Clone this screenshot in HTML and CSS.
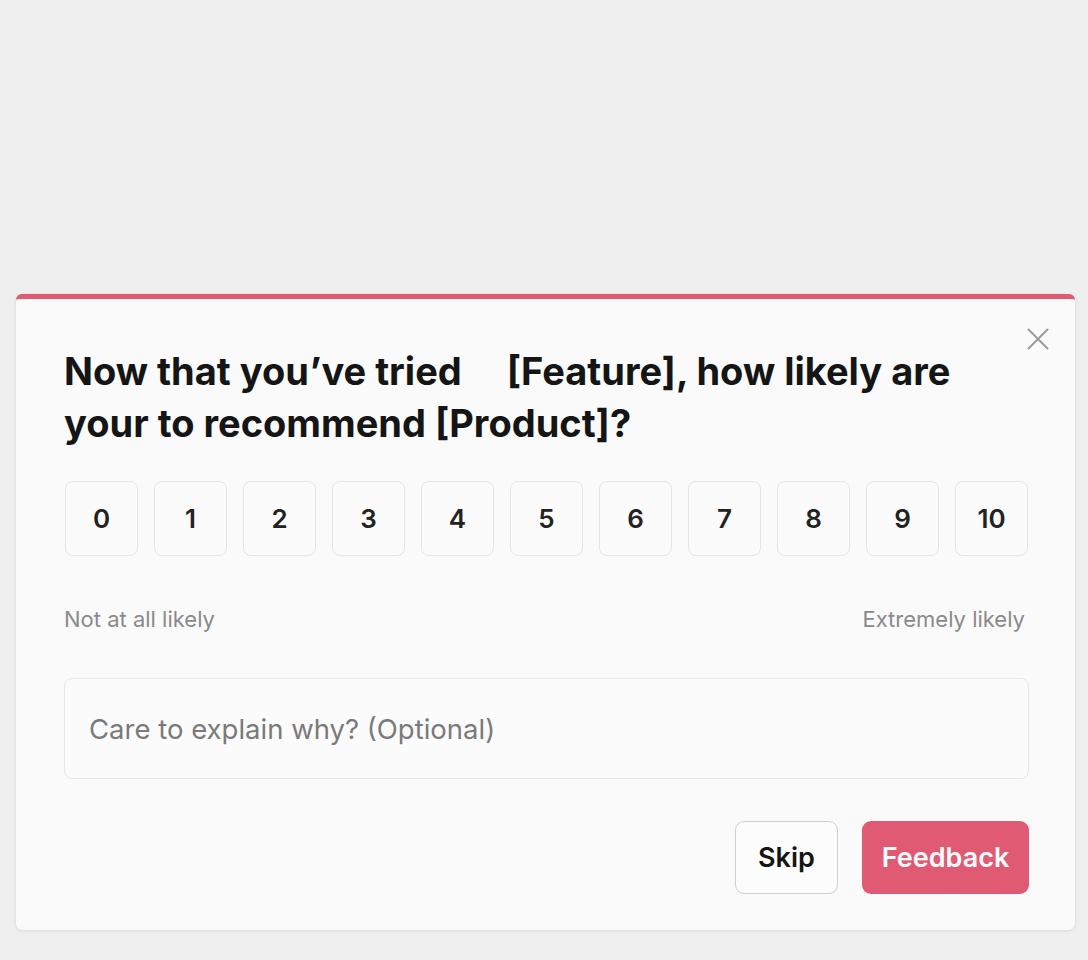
FILE: index.html
```html
<!DOCTYPE html>
<html lang="en">
<head>
<meta charset="utf-8">
<title>NPS survey</title>
<link rel="stylesheet" href="styles.css">
</head>
<body>
<div class="page">
  <div class="card">
    <button class="close" aria-label="Close">
      <svg width="24" height="24" viewBox="0 0 24 24"><path d="M2.5 2.5 L21.5 21.5 M21.5 2.5 L2.5 21.5" stroke="#9a9a9a" stroke-width="2" fill="none" stroke-linecap="round"/></svg>
    </button>
    <h1 class="title">Now that you’ve tried <span class="gap"></span>[Feature], how likely are<br>your to recommend [Product]?</h1>
    <div class="scale">
      <button class="score">0</button>
      <button class="score">1</button>
      <button class="score">2</button>
      <button class="score">3</button>
      <button class="score">4</button>
      <button class="score">5</button>
      <button class="score">6</button>
      <button class="score">7</button>
      <button class="score">8</button>
      <button class="score">9</button>
      <button class="score">10</button>
    </div>
    <div class="labels">
      <span>Not at all likely</span>
      <span>Extremely likely</span>
    </div>
    <div class="field">Care to explain why? (Optional)</div>
    <div class="actions">
      <button class="btn skip">Skip</button>
      <button class="btn primary">Feedback</button>
    </div>
  </div>
</div>
</body>
</html>
```
FILE: styles.css
```css
* { box-sizing: border-box; }
html, body { margin: 0; padding: 0; }
body {
  background: #efefef;
  font-family: "Inter", "Liberation Sans", sans-serif;
  width: 1088px;
  height: 960px;
  overflow: hidden;
}
.page {
  padding: 294px 13px 0 16px;
}
.card {
  position: relative;
  width: 1059px;
  height: 636px;
  background: #fafafa;
  border-top: 5px solid #e25a72;
  border-radius: 6px;
  box-shadow: 0 1px 4px rgba(0,0,0,0.08), 0 0 1px rgba(0,0,0,0.12);
  padding: 46px 46px 0 48px;
}
.close {
  position: absolute;
  top: 28px;
  right: 25px;
  background: none;
  border: 0;
  padding: 0;
  width: 24px;
  height: 24px;
  cursor: pointer;
}
.title {
  margin: 0;
  font-size: 38px;
  line-height: 52px;
  font-weight: 700;
  color: #151515;
  letter-spacing: 0;
}
.gap {
  display: inline-block;
  width: 36px;
}
.scale {
  display: flex;
  gap: 16px;
  margin-top: 32px;
  padding-left: 1px;
}
.score {
  width: 73px;
  height: 75px;
  border: 1.5px solid #e6e6e6;
  border-radius: 8px;
  background: #fbfbfb;
  font-family: "Inter", "Liberation Sans", sans-serif;
  font-size: 26px;
  font-weight: 600;
  color: #222;
  padding: 0;
}
.labels {
  display: flex;
  justify-content: space-between;
  margin-top: 50px;
  padding: 0 4px 0 0;
  font-size: 22px;
  line-height: 26px;
  color: #8a8a8a;
}
.field {
  margin-top: 46px;
  height: 101px;
  border: 1.5px solid #e8e8e8;
  border-radius: 8px;
  background: #fbfbfb;
  padding: 0 24px;
  display: flex;
  align-items: center;
  font-size: 27.5px;
  color: #7a7a7a;
}
.actions {
  display: flex;
  justify-content: flex-end;
  gap: 24px;
  margin-top: 42px;
}
.btn {
  height: 73px;
  border-radius: 9px;
  font-family: "Inter", "Liberation Sans", sans-serif;
  font-size: 27px;
  font-weight: 600;
  padding: 0;
}
.skip {
  width: 103px;
  background: #fcfcfc;
  border: 1.5px solid #cfcfcf;
  color: #151515;
}
.primary {
  width: 167px;
  background: #e05a74;
  border: 0;
  color: #fbfbfb;
}
```
